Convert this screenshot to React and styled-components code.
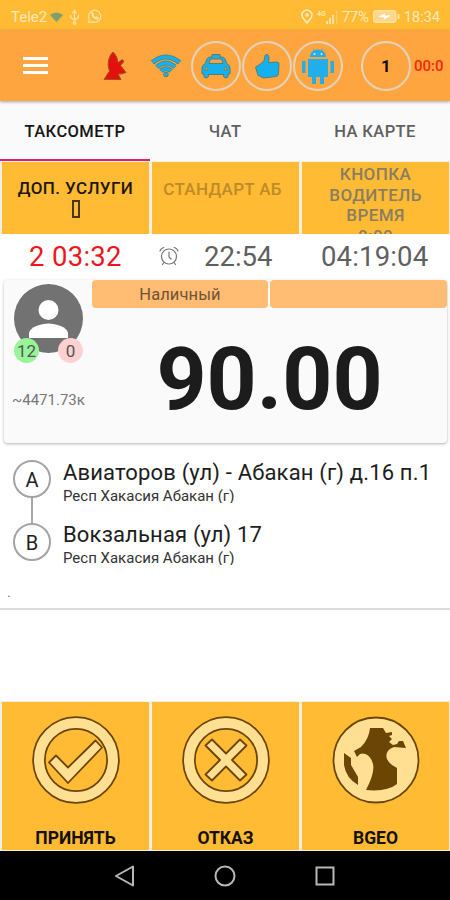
import React from 'react';
import styled, { createGlobalStyle } from 'styled-components';

const Colors = {
  amber: '#ffbb33',
  orange: '#ffa540',
  chip: '#ffbc72',
  blue: '#16b0ee',
  pink: '#e0206c',
  brown: '#6b4503',
  cream: '#ffe093',
};

const GlobalStyle = createGlobalStyle`
  * { box-sizing: border-box; }
  body {
    margin: 0;
    background: white;
    font-family: Roboto, "Noto Sans", sans-serif;
  }
`

const Screen = styled.div`
  width: 450px;
  height: 900px;
  display: flex;
  flex-direction: column;
  overflow: hidden;
  background: white;
`

const StatusBar = styled.div`
  height: 30px;
  flex: none;
  display: flex;
  align-items: center;
  justify-content: space-between;
  padding: 3px 10px 0 11px;
  background: ${Colors.amber};
  color: #ffe9bd;
`

const StatusGroup = styled.div`
  display: flex;
  align-items: center;
  gap: ${p => p.$gap}px;
`

const StatusText = styled.span`
  font-size: 15px;
  letter-spacing: ${p => p.$spacing || 0}px;
  line-height: 20px;
`

const Toolbar = styled.div`
  height: 71px;
  flex: none;
  display: flex;
  align-items: center;
  padding-left: 23px;
  background: ${Colors.orange};
  box-shadow: 0 1px 3px rgba(0, 0, 0, 0.35);
  z-index: 1;
`

const MenuButton = styled.div`
  width: 25px;
  height: 17px;
  margin-right: 55px;
  display: flex;
  flex-direction: column;
  justify-content: space-between;
  span {
    height: 3px;
    background: white;
  }
`

const ToolIcon = styled.div`
  width: ${p => p.$width}px;
  height: 50px;
  margin-right: ${p => p.$gap || 0}px;
  display: flex;
  align-items: center;
  justify-content: center;
`

const Round = styled.div`
  width: 50px;
  height: 50px;
  flex: none;
  margin-right: ${p => p.$gap}px;
  display: flex;
  align-items: center;
  justify-content: center;
  border: 2px solid #e2d3bd;
  border-radius: 50%;
  color: #111;
  font-size: 17px;
  font-weight: 700;
`

const Elapsed = styled.span`
  color: #f5280c;
  font-size: 15px;
  font-weight: 500;
`

const Tabs = styled.div`
  height: 60px;
  flex: none;
  display: grid;
  grid-template-columns: repeat(3, 1fr);
  background: #fafafa;
`

const Tab = styled.div`
  display: flex;
  align-items: center;
  justify-content: center;
  padding-top: 2px;
  color: ${p => (p.$active ? '#161616' : '#606060')};
  border-bottom: 2px solid ${p => (p.$active ? Colors.pink : 'transparent')};
  font-size: 16.5px;
  font-weight: 500;
  letter-spacing: 0.4px;
`

const Tiles = styled.div`
  height: ${p => p.$height}px;
  flex: none;
  display: grid;
  grid-template-columns: repeat(3, 147px);
  gap: 3px;
  padding: 1px 1px 0 2px;
  background: #f3efe4;
`

const Tile = styled.div`
  height: 72px;
  padding-top: ${p => p.$top || 0}px;
  padding-right: ${p => p.$right || 0}px;
  overflow: hidden;
  background: ${Colors.amber};
  color: ${p => p.$color};
  font-size: 17px;
  font-weight: 500;
  line-height: 20.5px;
  letter-spacing: ${p => p.$spacing || 0.4}px;
  text-align: center;
`

const Missing = styled.span`
  display: block;
  width: 8px;
  height: 18px;
  margin: 1px auto 0;
  border: 2px solid #4a3710;
`

const Timers = styled.div`
  height: 46px;
  flex: none;
  display: flex;
  align-items: center;
  padding-left: 29px;
`

const Timer = styled.span`
  width: ${p => p.$width}px;
  color: ${p => p.$color || '#606060'};
  font-size: 27.5px;
  line-height: 44px;
  letter-spacing: ${p => p.$spacing || 0}px;
  white-space: nowrap;
`

const AlarmSlot = styled.div`
  width: 45px;
  padding-bottom: 2px;
  display: flex;
`

const Order = styled.div`
  height: 163px;
  flex: none;
  margin: 0 3px 0 4px;
  display: flex;
  background: #fafafa;
  border-radius: 4px;
  box-shadow: 0 1px 3px rgba(0, 0, 0, 0.3);
`

const Client = styled.div`
  width: 88px;
  padding: 4px 0 0 10px;
`

const Avatar = styled.div`
  position: relative;
  width: 69px;
  height: 69px;
`

const Count = styled.span`
  position: absolute;
  top: 54px;
  left: ${p => p.$left}px;
  width: 25px;
  height: 25px;
  border-radius: 50%;
  background: ${p => p.$color};
  color: #545454;
  font-size: 17px;
  line-height: 26px;
  text-align: center;
`

const Distance = styled.div`
  margin: 38px 0 0 -2px;
  color: #777;
  font-size: 15px;
  line-height: 18px;
  white-space: nowrap;
`

const Fare = styled.div`
  flex: 1;
`

const Chips = styled.div`
  display: grid;
  grid-template-columns: 176px 177px;
  gap: 2px;
`

const Chip = styled.div`
  height: 28px;
  border-radius: 4px;
  background: ${Colors.chip};
  color: #705436;
  font-size: 16.5px;
  line-height: 30px;
  letter-spacing: 0.1px;
  text-align: center;
`

const Price = styled.div`
  margin-top: 21px;
  color: #1c1c1c;
  font-size: 87.5px;
  font-weight: 700;
  line-height: 100px;
  text-align: center;
`

const Route = styled.div`
  height: 167px;
  flex: none;
  display: flex;
  padding: 17px 0 0 13px;
  border-bottom: 2px solid #dcdcdc;
`

const Stops = styled.div`
  width: 50px;
`

const Stop = styled.div`
  width: 38px;
  height: 38px;
  border: 2px solid #a4a4a4;
  border-radius: 50%;
  color: #222;
  font-size: 20px;
  line-height: 37px;
  text-align: center;
`

const StopLine = styled.div`
  width: 2px;
  height: 25px;
  margin-left: 18px;
  background: #a8a8a8;
`

const Address = styled.div`
  height: 62px;
  color: #1d1d1d;
  white-space: nowrap;
`

const Street = styled.div`
  font-size: 22px;
  line-height: 25px;
  letter-spacing: 0.16px;
`

const Region = styled.div`
  height: 18px;
  overflow: hidden;
  color: #333;
  font-size: 15px;
  line-height: 23px;
`

const Note = styled.div`
  margin-top: 1px;
  margin-left: -56px;
  color: #777;
  font-size: 14px;
  line-height: 14px;
`

const Spacer = styled.div`
  flex: 1;
`

const Action = styled.div`
  height: 148px;
  display: flex;
  flex-direction: column;
  align-items: center;
  padding-top: 14px;
  background: ${Colors.amber};
  color: #15110a;
  font-size: 17.5px;
  font-weight: 700;
  svg {
    margin-bottom: 24px;
  }
`

const NavBar = styled.div`
  height: 49px;
  flex: none;
  display: flex;
  align-items: center;
  justify-content: center;
  gap: 76px;
  background: black;
`

const outline = { stroke: '#557a62', strokeWidth: 0.9 };

const Dish = () => (
  <svg width="24" height="30" viewBox="0 0 24 30">
    <path d="M10 1 C5 6 4 14 6.500 20 L1 28.500 H18 L15 23 Q19 23.500 23 21.500 L17.500 14.500 L19.500 12 A1.600 1.600 0 1 0 17.500 10 L15 11.500 Q14.500 5 10 1 Z"
      fill="#e4100d" stroke="#a4501c" strokeWidth="1" />
  </svg>
)

// thick arcs give the outline, thin ones over them the blue
const Wifi = () => (
  <svg width="32" height="24" viewBox="0 0 32 24" fill="none">
    {[{ c: '#4d7f70', w: 5 }, { c: Colors.blue, w: 3.2 }].map(s => (
      <g key={s.c} stroke={s.c} strokeWidth={s.w}>
        <path d="M2.500 8.500 Q16 -2.500 29.500 8.500" />
        <path d="M7 13 Q16 5 25 13" />
        <path d="M11 17 Q16 12.500 21 17" />
      </g>
    ))}
    <circle cx="16" cy="20.500" r="2.300" fill={Colors.blue} {...outline} />
  </svg>
)

const Taxi = () => (
  <svg width="30" height="26" viewBox="0 0 30 26">
    <path d="M11 4 V1.500 H19 V4 H21 Q23 4 24 6 L26 11 Q29 12 29 15 V21 H27 V23 Q27 25 25 25 Q22.500 25 22.500 23 V21.500 H7.500 V23 Q7.500 25 5 25 Q3 25 3 23 V21 H1 V15 Q1 12 4 11 L6 6 Q7 4 9 4 Z"
      fill={Colors.blue} {...outline} />
    <path d="M9.500 6 H20.500 L22 10.500 H8 Z" fill="#f2a54e" {...outline} />
    <circle cx="5.500" cy="15.500" r="1.300" fill={Colors.orange} {...outline} />
    <circle cx="24.500" cy="15.500" r="1.300" fill={Colors.orange} {...outline} />
  </svg>
)

const Thumb = () => (
  <svg width="26" height="26" viewBox="0 0 26 26">
    <path d="M1.500 14 L6.500 11 Q11 8 11 3 Q11.500 .8 13.500 1.500 Q16 3 14.500 9.500 L23 9 Q25 9 25 11 L24.500 21 Q24 23.500 21.500 23.500 L10 25 Q8 25 6 23 L4 22.500 Z"
      fill={Colors.blue} {...outline} />
  </svg>
)

const Android = () => (
  <svg width="34" height="38" viewBox="0 0 34 38" fill="#22aeea">
    <path d="M9 10 Q9 5 13 3.500 L11.500 1 L14 3 Q17 2 20 3 L22.500 1 L21 3.500 Q25 5 25 10 Z" />
    <path d="M7 12 H27 V30 H23 V37 H19 V30 H15 V37 H11 V30 H7 Z" />
    <path d="M1 14 H4.500 V26 H1 Z M29.500 14 H33 V26 H29.500 Z" />
    <circle cx="13.500" cy="7" r="1" fill="#f4e4cf" />
    <circle cx="20.500" cy="7" r="1" fill="#f4e4cf" />
  </svg>
)

const Alarm = () => (
  <svg width="20" height="20" viewBox="0 0 20 20" fill="none" stroke="#777" strokeWidth="1.200" strokeLinecap="round">
    <circle cx="10" cy="10.500" r="7.500" />
    <path d="M10 6 V11 L12 13 M1 5 Q2 2 5 1.500 M15 1.500 Q18 2 19 5 M5 16.500 L3.500 18.500 M15 16.500 L16.500 18.500" />
  </svg>
)

const Person = () => (
  <svg width="69" height="69" viewBox="0 0 69 69">
    <circle cx="34.500" cy="34.500" r="34.500" fill="#727272" />
    <circle cx="34.500" cy="26" r="10" fill="white" />
    <path d="M15 54 V49 C16 43 27 39.500 34.500 39.500 C42 39.500 53 43 54 49 V54 Z" fill="white" />
  </svg>
)

const Ring = ({ children }) => (
  <svg width="88" height="88" viewBox="0 0 88 88" fill="none">
    <circle cx="44" cy="44" r="37" stroke={Colors.brown} strokeWidth="13.500" />
    <circle cx="44" cy="44" r="37" stroke={Colors.cream} strokeWidth="10" />
    {children}
  </svg>
)

const mark = { fill: Colors.cream, stroke: Colors.brown, strokeWidth: 1.8, strokeLinejoin: 'round' };

const Accept = () => (
  <Ring>
    <path d="M17 46.500 L24 39.500 L36 51.500 L63.500 24.500 L70 31.500 L36 67 Z" {...mark} />
  </Ring>
)

const Reject = () => (
  <Ring>
    <path d="M30 23.500 L44 37.500 L58 23.500 L64.500 29.500 L50 44 L64.500 58.500 L58 64.500 L44 50.500 L30 64.500 L23.500 58.500 L38 44 L23.500 29.500 Z" {...mark} />
  </Ring>
)

const Globe = () => (
  <svg width="88" height="88" viewBox="0 0 88 88">
    <circle cx="44" cy="44" r="42.500" {...mark} />
    <path d="M38 12 H51 L54 17 L60 16 V19 L57 20 L60 23 L57 26 L61 29 L65 28 L67 25 H71 L74 32 L62 31 C56 33 53 38 55 43 Q58 49 65 52 V68 Q55 76 34 74 Q43 57 41 48 C39 40 33 36 28 38 L25 41 L22 35 L29 31 Q37 23 38 12 Z"
      fill={Colors.brown} />
    <path d="M12 37 L19 42 V49 L26 61 V69 Q14 62 12 49 Z" fill={Colors.brown} />
  </svg>
)

const App = () => {
  return (
    <Screen>
      <GlobalStyle />
      <StatusBar>
        <StatusGroup $gap={2.5}>
          <StatusText>Tele2</StatusText>
          <svg width="13" height="10" viewBox="0 0 13 10"><path d="M0 3 Q6.500 -2 13 3 L6.500 10 Z" fill="#7f9f70" /></svg>
          <svg width="19" height="16" viewBox="0 0 18 16" fill="none" stroke="#ffe2a8" strokeWidth="1.300">
            <path d="M9 13 V2 M7 4 L9 1.500 L11 4 M5 6 V8.500 L9 11 L13 8.500 V6" />
            <circle cx="9" cy="14" r="1.200" />
          </svg>
          <svg width="15" height="15" viewBox="0 0 16 16" fill="none" stroke="#ffe2a8" strokeWidth="1.300">
            <path d="M1.500 14.500 L2.500 11 A6.500 6.500 0 1 1 5 13.500 Z" />
            <path d="M5 4.500 Q5 9 11 11 L12 9.500 L10 8.500 L9 9.500 L6.500 7 L7 6 L6 4 Z" />
          </svg>
        </StatusGroup>
        <StatusGroup $gap={4}>
          <svg width="12" height="15" viewBox="0 0 12 15" fill="none" stroke="#ffedc8" strokeWidth="1.500">
            <path d="M6 14 L2 9 Q0 5 2 3 Q6 -1 10 3 Q12 5 10 9 Z" />
            <circle cx="6" cy="6" r="1" />
          </svg>
          <svg width="21" height="14" viewBox="0 0 21 14" fill="#ffe2a8">
            <text x="0" y="6" fontSize="7" fontWeight="700">4G</text>
            <path d="M9 11 H11 V14 H9 Z M12 8 H14 V14 H12 Z M15 5 H17 V14 H15 Z" />
            <path d="M19 1 H20.500 V14 H19 Z" opacity=".4" />
          </svg>
          <StatusText $spacing={-0.3}>77%</StatusText>
          <svg width="27" height="13" viewBox="0 0 27 13">
            <rect x=".7" y=".7" width="22" height="11.600" rx="2" fill="#ffd68a" stroke="#ffe2a8" strokeWidth="1.400" />
            <path d="M5 6.500 L12 3.500 V5.500 H18 L11 9.500 V7.500 Z" fill="white" />
            <rect x="24.500" y="4" width="2" height="5" fill="#ffe2a8" />
          </svg>
          <StatusText $spacing={-0.2}>18:34</StatusText>
        </StatusGroup>
      </StatusBar>

      <Toolbar>
        <MenuButton><span /><span /><span /></MenuButton>
        <ToolIcon $width={24} $gap={23}><Dish /></ToolIcon>
        <ToolIcon $width={32} $gap={9}><Wifi /></ToolIcon>
        <Round $gap={1}><Taxi /></Round>
        <Round $gap={1}><Thumb /></Round>
        <Round $gap={18}><Android /></Round>
        <Round $gap={3}>1</Round>
        <Elapsed>00:0</Elapsed>
      </Toolbar>

      <Tabs>
        <Tab $active>ТАКСОМЕТР</Tab>
        <Tab>ЧАТ</Tab>
        <Tab>НА КАРТЕ</Tab>
      </Tabs>

      <Tiles $height={73}>
        <Tile $top={16} $color="#1d1607">ДОП. УСЛУГИ<Missing /></Tile>
        <Tile $top={17} $right={6} $color="#bd8b27" $spacing={0.3}>СТАНДАРТ АБ</Tile>
        <Tile $top={2} $color="#8a7d62">КНОПКА<br />ВОДИТЕЛЬ<br />ВРЕМЯ<br />0:00</Tile>
      </Tiles>

      <Timers>
        <Timer $width={130} $color="#ef1620" $spacing={0.3}>2 03:32</Timer>
        <AlarmSlot><Alarm /></AlarmSlot>
        <Timer $width={117}>22:54</Timer>
        <Timer $width={110} $spacing={0.15}>04:19:04</Timer>
      </Timers>

      <Order>
        <Client>
          <Avatar>
            <Person />
            <Count $left={0} $color="#98f498">12</Count>
            <Count $left={44} $color="#ffd0d0">0</Count>
          </Avatar>
          <Distance>~4471.73к</Distance>
        </Client>
        <Fare>
          <Chips>
            <Chip>Наличный</Chip>
            <Chip />
          </Chips>
          <Price>90.00</Price>
        </Fare>
      </Order>

      <Route>
        <Stops>
          <Stop>A</Stop>
          <StopLine />
          <Stop>B</Stop>
        </Stops>
        <div>
          <Address>
            <Street>Авиаторов (ул) - Абакан (г) д.16 п.1</Street>
            <Region>Респ Хакасия Абакан (г)</Region>
          </Address>
          <Address>
            <Street>Вокзальная (ул) 17</Street>
            <Region>Респ Хакасия Абакан (г)</Region>
          </Address>
          <Note>.</Note>
        </div>
      </Route>

      <Spacer />

      <Tiles $height={150}>
        <Action><Accept />ПРИНЯТЬ</Action>
        <Action><Reject />ОТКАЗ</Action>
        <Action><Globe />BGEO</Action>
      </Tiles>

      <NavBar>
        <svg width="24" height="24" viewBox="0 0 24 24" fill="none" stroke="#b8b8b8" strokeWidth="2" strokeLinejoin="round">
          <path d="M3 12 L20 2.500 V21.500 Z" />
        </svg>
        <svg width="24" height="24" viewBox="0 0 24 24" fill="none" stroke="#b8b8b8" strokeWidth="2">
          <circle cx="12" cy="12" r="9.500" />
        </svg>
        <svg width="24" height="24" viewBox="0 0 24 24" fill="none" stroke="#b8b8b8" strokeWidth="2">
          <rect x="3.500" y="3.500" width="17" height="17" />
        </svg>
      </NavBar>
    </Screen>
  )
}

export default App;
